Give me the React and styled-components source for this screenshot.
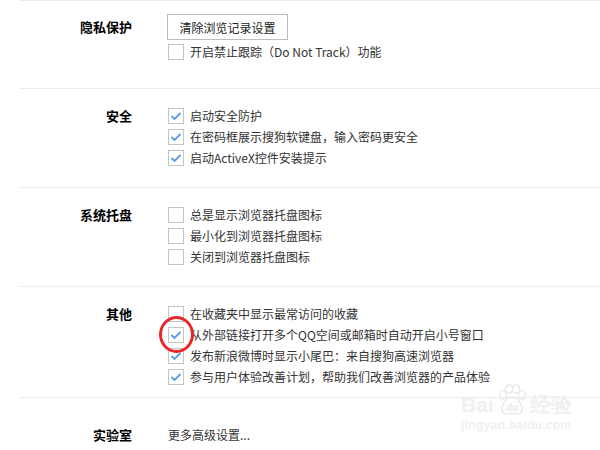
import styled, { createGlobalStyle } from "styled-components";

const Global = createGlobalStyle`
  html, body { margin: 0; padding: 0; background: #fff; }
  body { font-family: "Noto Sans CJK SC", "DejaVu Sans", sans-serif; }
`;

const Page = styled.div`
  position: relative;
  width: 600px;
  height: 450px;
  overflow: hidden;
  background: #fff;
`;

const Section = styled.div`
  margin-left: 20px;
  border-top: 1px solid #ececec;
  padding: ${(p) => p.$pt}px 0 ${(p) => p.$pb}px;
  display: grid;
  grid-template-columns: 112px 1fr;
  column-gap: 36px;
  align-items: start;
`;

const Label = styled.div`
  text-align: right;
  font-size: 13px;
  font-weight: bold;
  color: #000;
  line-height: ${(p) => p.$lh || 21}px;
`;

const Items = styled.div`
  display: flex;
  flex-direction: column;
  gap: ${(p) => p.$gap || 0}px;
`;

const Row = styled.div`
  display: flex;
  align-items: center;
  height: 21px;
  font-size: 12px;
  color: #333;
  gap: 6px;
  white-space: nowrap;
`;

const Box = styled.span`
  box-sizing: border-box;
  width: 16px;
  height: 16px;
  border: 1px solid #c4c4c4;
  background: #fff;
  display: flex;
  align-items: center;
  justify-content: center;
`;

const Button = styled.button`
  box-sizing: border-box;
  width: 121px;
  height: 26px;
  margin-left: -1px;
  border: 1px solid #bdbdbd;
  background: #fff;
  font-family: inherit;
  font-size: 12px;
  color: #222;
  padding: 0;
`;

const Circle = styled.div`
  position: absolute;
  left: 159px;
  top: 316px;
  width: 29px;
  height: 31px;
  border: 3px solid #e8262a;
  border-radius: 50%;
`;

const Watermark = styled.div`
  position: absolute;
  left: 461px;
  top: 384px;
  color: #f0f0f0;
  display: flex;
  flex-direction: column;
  align-items: flex-start;
`;

const MarkTop = styled.div`
  display: flex;
  align-items: flex-end;
  font-family: "Liberation Sans", sans-serif;
  font-weight: bold;
  font-size: 21px;
  line-height: 22px;
  gap: 2px;
`;

const MarkUrl = styled.div`
  font-family: "Liberation Sans", sans-serif;
  font-size: 12px;
  font-weight: bold;
  line-height: 14px;
  margin-top: 2px;
  letter-spacing: 0.3px;
`;

const Check = () => (
  <svg width="12" height="10" viewBox="0 0 12 10">
    <path d="M1.5 5 L4.5 8 L10.5 2" fill="none" stroke="#5b9be6" strokeWidth="1.8" />
  </svg>
);

const Item = ({ checked, children }) => (
  <Row>
    <Box>{checked && <Check />}</Box>
    <span>{children}</span>
  </Row>
);

const Paw = () => (
  <svg width="32" height="32" viewBox="0 0 32 32">
    <g fill="none" stroke="#e8e8e8" strokeWidth="1.3">
      <ellipse cx="7" cy="11" rx="3.5" ry="4.5" />
      <ellipse cx="13" cy="5" rx="3.5" ry="4.2" />
      <ellipse cx="20" cy="5" rx="3.5" ry="4.2" />
      <ellipse cx="26" cy="11" rx="3.5" ry="4.5" />
      <path d="M16 13 C10 13 5 22 6 27 C7 31 12 30 16 29 C20 30 25 31 26 27 C27 22 22 13 16 13 Z" />
    </g>
    <text x="16" y="27" textAnchor="middle" fontSize="10" fontWeight="bold" fill="#eaeaea" fontFamily="Liberation Sans, sans-serif">du</text>
  </svg>
);

export default function App() {
  return (
    <Page>
      <Global />
      <Section $pt={13} $pb={26}>
        <Label $lh={26}>隐私保护</Label>
        <Items $gap={1}>
          <Button>清除浏览记录设置</Button>
          <Item>开启禁止跟踪（Do Not Track）功能</Item>
        </Items>
      </Section>

      <Section $pt={16} $pb={19}>
        <Label>安全</Label>
        <Items>
          <Item checked>启动安全防护</Item>
          <Item checked>在密码框展示搜狗软键盘，输入密码更安全</Item>
          <Item checked>启动ActiveX控件安装提示</Item>
        </Items>
      </Section>

      <Section $pt={16} $pb={19}>
        <Label>系统托盘</Label>
        <Items>
          <Item>总是显示浏览器托盘图标</Item>
          <Item>最小化到浏览器托盘图标</Item>
          <Item>关闭到浏览器托盘图标</Item>
        </Items>
      </Section>

      <Section $pt={16} $pb={10}>
        <Label>其他</Label>
        <Items>
          <Item>在收藏夹中显示最常访问的收藏</Item>
          <Item checked>从外部链接打开多个QQ空间或邮箱时自动开启小号窗口</Item>
          <Item checked>发布新浪微博时显示小尾巴：来自搜狗高速浏览器</Item>
          <Item checked>参与用户体验改善计划，帮助我们改善浏览器的产品体验</Item>
        </Items>
      </Section>

      <Section $pt={26} $pb={20}>
        <Label>实验室</Label>
        <Items>
          <Row>更多高级设置...</Row>
        </Items>
      </Section>

      <Circle />
      <Watermark>
        <MarkTop>
          <span>Bai</span>
          <Paw />
          <span>经验</span>
        </MarkTop>
        <MarkUrl>jingyan.baidu.com</MarkUrl>
      </Watermark>
    </Page>
  );
}
